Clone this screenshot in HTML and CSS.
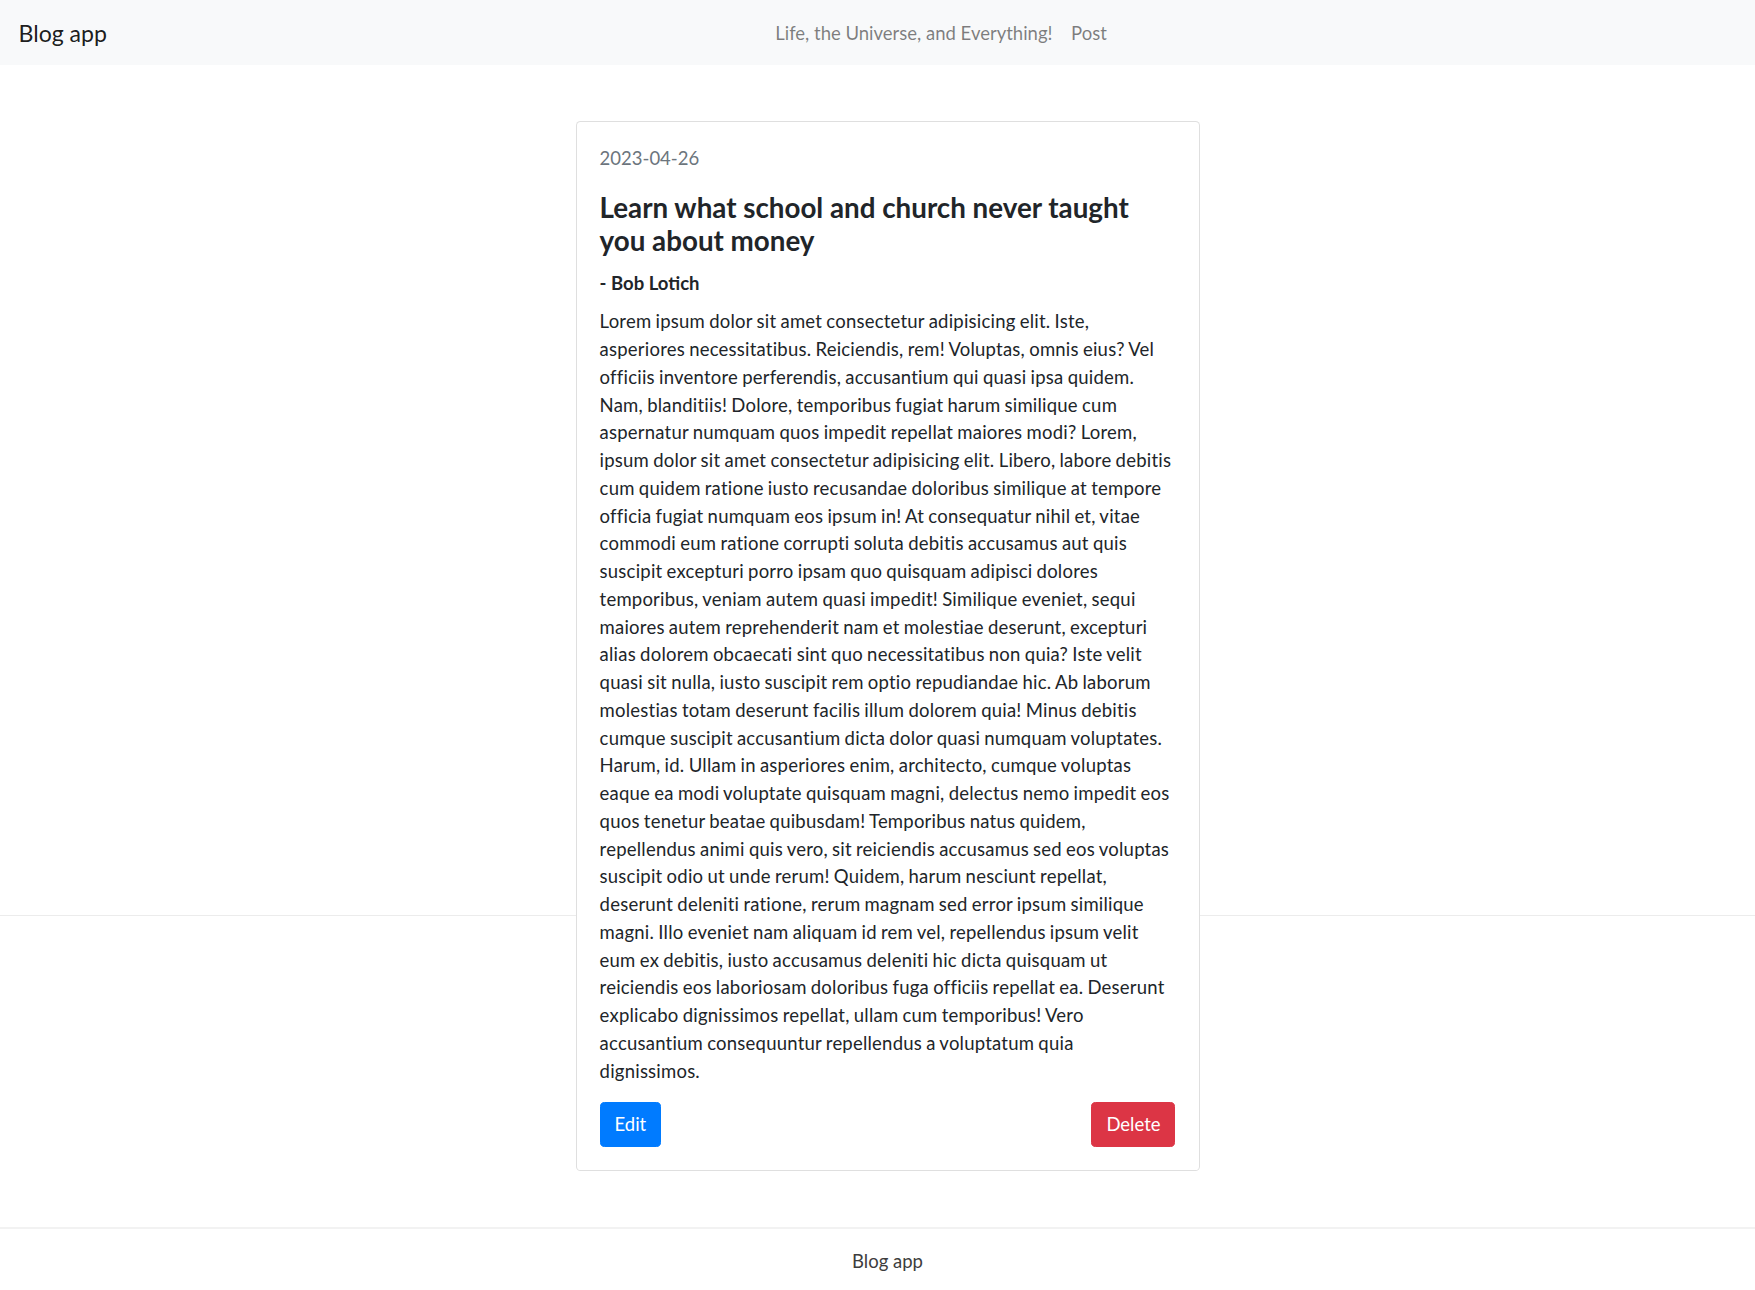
FILE: index.html
```html
<!DOCTYPE html>
<html lang="en">
<head>
<meta charset="utf-8">
<title>Blog app</title>
<link rel="stylesheet" href="styles.css">
</head>
<body>
<div class="page">
  <nav class="navbar">
    <a class="brand" href="#">Blog app</a>
    <ul class="nav">
      <li><a class="nav-link" href="#">Life, the Universe, and Everything!</a></li>
      <li><a class="nav-link" href="#">Post</a></li>
    </ul>
  </nav>
  <div class="fold-line"></div>
  <main class="main">
    <article class="card">
      <div class="card-body">
        <p class="date">2023-04-26</p>
        <h4 class="title">Learn what school and church never taught you about money</h4>
        <p class="author">- Bob Lotich</p>
        <p class="content">Lorem ipsum dolor sit amet consectetur adipisicing elit. Iste, asperiores necessitatibus. Reiciendis, rem! Voluptas, omnis eius? Vel officiis inventore perferendis, accusantium qui quasi ipsa quidem. Nam, blanditiis! Dolore, temporibus fugiat harum similique cum aspernatur numquam quos impedit repellat maiores modi? Lorem, ipsum dolor sit amet consectetur adipisicing elit. Libero, labore debitis cum quidem ratione iusto recusandae doloribus similique at tempore officia fugiat numquam eos ipsum in! At consequatur nihil et, vitae commodi eum ratione corrupti soluta debitis accusamus aut quis suscipit excepturi porro ipsam quo quisquam adipisci dolores temporibus, veniam autem quasi impedit! Similique eveniet, sequi maiores autem reprehenderit nam et molestiae deserunt, excepturi alias dolorem obcaecati sint quo necessitatibus non quia? Iste velit quasi sit nulla, iusto suscipit rem optio repudiandae hic. Ab laborum molestias totam deserunt facilis illum dolorem quia! Minus debitis cumque suscipit accusantium dicta dolor quasi numquam voluptates. Harum, id. Ullam in asperiores enim, architecto, cumque voluptas eaque ea modi voluptate quisquam magni, delectus nemo impedit eos quos tenetur beatae quibusdam! Temporibus natus quidem, repellendus animi quis vero, sit reiciendis accusamus sed eos voluptas suscipit odio ut unde rerum! Quidem, harum nesciunt repellat, deserunt deleniti ratione, rerum magnam sed error ipsum similique magni. Illo eveniet nam aliquam id rem vel, repellendus ipsum velit eum ex debitis, iusto accusamus deleniti hic dicta quisquam ut reiciendis eos laboriosam doloribus fuga officiis repellat ea. Deserunt explicabo dignissimos repellat, ullam cum temporibus! Vero accusantium consequuntur repellendus a voluptatum quia dignissimos.</p>
        <div class="actions">
          <a class="btn btn-primary" href="#">Edit</a>
          <a class="btn btn-danger" href="#">Delete</a>
        </div>
      </div>
    </article>
  </main>
  <footer class="footer">Blog app</footer>
</div>
</body>
</html>
```

FILE: styles.css
```css
html { overflow: hidden; }
body {
  margin: 0;
  font-family: Lato, "Open Sans", sans-serif;
  font-size: 18.5px;
  line-height: 27.75px;
  color: #212529;
  background: #fff;
}
a { text-decoration: none; }
.page {
  width: 1775px;
  position: relative;
}
.navbar {
  display: flex;
  align-items: center;
  padding: 10.25px 18.5px 8.25px;
  background: #f8f9fa;
}
.brand {
  font-size: 23.1px;
  line-height: 34.7px;
  padding: 5.8px 0;
  margin-right: 18.5px;
  color: rgba(0, 0, 0, 0.9);
}
.nav {
  display: flex;
  list-style: none;
  margin: 0 auto;
  padding: 0;
}
.nav-link {
  display: block;
  padding: 9.25px;
  color: rgba(0, 0, 0, 0.5);
}
.fold-line {
  position: absolute;
  left: 0;
  right: 0;
  top: 915px;
  height: 1px;
  background: #ececec;
}
.main {
  padding: 56px 0;
}
.card {
  position: relative;
  z-index: 1;
  width: 624px;
  margin: 0 auto;
  box-sizing: border-box;
  background: #fff;
  border: 1px solid rgba(0, 0, 0, 0.125);
  border-radius: 4.6px;
}
.card-body {
  padding: 23.1px;
}
.date {
  margin: 0 0 18.5px;
  color: #6c757d;
}
.title {
  margin: 0 0 12.6px;
  font-size: 27.75px;
  line-height: 33.3px;
  font-weight: 700;
}
.author {
  margin: 0 0 10.3px;
  font-weight: 700;
}
.content {
  margin: 0 0 16.5px;
  letter-spacing: 0.22px;
  word-spacing: -0.75px;
}
.actions {
  display: flex;
  justify-content: space-between;
}
.btn {
  display: inline-block;
  padding: 7.7px 13.9px;
  border: 1px solid transparent;
  border-radius: 4.6px;
  color: #fff;
}
.btn-primary { background: #007bff; border-color: #007bff; }
.btn-danger { background: #dc3545; border-color: #dc3545; }
.footer {
  border-top: 2px solid #f2f2f2;
  padding: 18.5px 0;
  text-align: center;
  color: #3d3d3d;
}
```
